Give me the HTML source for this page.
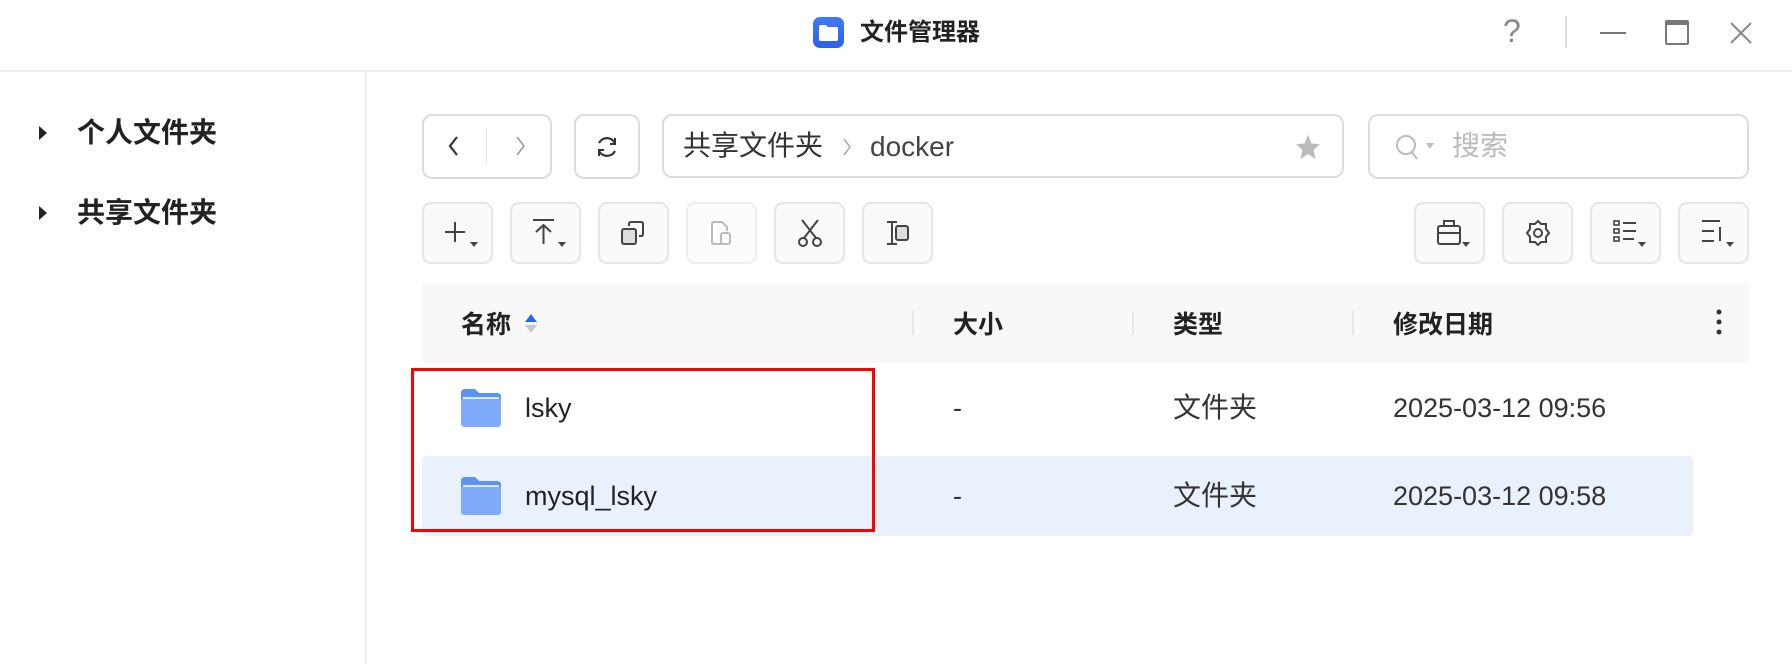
<!DOCTYPE html>
<html><head><meta charset="utf-8"><style>
*{margin:0;padding:0;box-sizing:border-box}
body{width:1792px;height:664px;background:#fff;font-family:"Liberation Sans","Noto Sans CJK SC",sans-serif;color:#222;position:relative;overflow:hidden}
.a{position:absolute}
.btn{position:absolute;border:2px solid #e6e6e6;border-radius:9px;background:#fafafa}
.box{position:absolute;border:2px solid #dcdcdc;border-radius:10px;background:#fff}
.t{position:absolute;white-space:nowrap;line-height:1}
svg{position:absolute}
</style></head><body>
<!-- title bar -->
<div class="a" style="left:0;top:70px;width:1792px;height:2px;background:#eee"></div>
<div class="a" style="left:813px;top:17px;width:31px;height:31px;border-radius:7px;background:linear-gradient(#3f7bf5,#2a62e8)"></div>
<svg style="left:818px;top:24px" width="21" height="18"><path d="M1 3 Q1 1 3 1 H8 L10 3 H18 Q20 3 20 5 V15 Q20 17 18 17 H3 Q1 17 1 15Z" fill="#fff"/></svg>
<div class="t" style="left:860px;top:21px;font-size:24px;font-weight:bold;color:#222">文件管理器</div>
<div class="t" style="left:1503px;top:15px;font-size:32px;color:#888">?</div>
<div class="a" style="left:1565px;top:16px;width:2px;height:32px;background:#ddd"></div>
<div class="a" style="left:1600px;top:32px;width:26px;height:2px;background:#777"></div>
<div class="a" style="left:1665px;top:20px;width:24px;height:25px;border:2px solid #777;border-top-width:5px;border-radius:2px"></div>
<svg style="left:1728px;top:20px" width="26" height="26"><path d="M3 3L23 23M23 3L3 23" stroke="#888" stroke-width="2"/></svg>
<!-- sidebar -->
<div class="a" style="left:365px;top:72px;width:2px;height:592px;background:#eee"></div>
<svg style="left:38px;top:126px" width="10" height="14"><path d="M1 0L9 7L1 14Z" fill="#222"/></svg>
<div class="t" style="left:77px;top:119px;font-size:28px;font-weight:bold">个人文件夹</div>
<svg style="left:38px;top:206px" width="10" height="14"><path d="M1 0L9 7L1 14Z" fill="#222"/></svg>
<div class="t" style="left:77px;top:199px;font-size:28px;font-weight:bold">共享文件夹</div>
<!-- nav -->
<div class="box" style="left:422px;top:114px;width:130px;height:65px"></div>
<div class="a" style="left:486px;top:128px;width:1px;height:36px;background:#e6e6e6"></div>
<svg style="left:448px;top:136px" width="12" height="20"><path d="M9 1L2 10L9 19" stroke="#333" stroke-width="2.2" fill="none"/></svg>
<svg style="left:514px;top:136px" width="12" height="20"><path d="M3 1L10 10L3 19" stroke="#999" stroke-width="1.6" fill="none"/></svg>
<div class="box" style="left:574px;top:114px;width:66px;height:65px"></div>
<svg style="left:594px;top:134px" width="26" height="26"><path d="M21 9A9 9 0 0 0 5 9M5 17A9 9 0 0 0 21 17" stroke="#333" stroke-width="2.2" fill="none"/><path d="M21 4V10H16" stroke="#333" stroke-width="2" fill="none"/><path d="M5 22V16H10" stroke="#333" stroke-width="2" fill="none"/></svg>
<div class="box" style="left:662px;top:114px;width:682px;height:64px"></div>
<div class="t" style="left:683px;top:132px;font-size:28px;color:#333">共享文件夹</div>
<svg style="left:842px;top:138px" width="10" height="18"><path d="M2 1L8 9L2 17" stroke="#aaa" stroke-width="1.5" fill="none"/></svg>
<div class="t" style="left:870px;top:133px;font-size:28px;color:#444">docker</div>
<svg style="left:1295px;top:134px" width="26" height="26"><path d="M13 1L16.5 9.5L25 10L18.5 16L20.5 25L13 20L5.5 25L7.5 16L1 10L9.5 9.5Z" fill="#bbb"/></svg>
<div class="box" style="left:1368px;top:114px;width:381px;height:65px"></div>
<svg style="left:1395px;top:133px" width="28" height="30"><circle cx="11" cy="12" r="9" stroke="#bbb" stroke-width="2" fill="none"/><path d="M17 19L22 26" stroke="#bbb" stroke-width="2"/></svg>
<svg style="left:1426px;top:143px" width="8" height="6"><path d="M0 0H8L4 6Z" fill="#bbb"/></svg>
<div class="t" style="left:1452px;top:132px;font-size:28px;color:#bbb">搜索</div>
<!-- toolbar -->
<div class="btn" style="left:422px;top:202px;width:71px;height:62px"></div>
<svg style="left:444px;top:220px" width="40" height="30"><path d="M11 2V22M1 12H21" stroke="#444" stroke-width="2"/><path d="M26 22H34L30 27Z" fill="#444"/></svg>
<div class="btn" style="left:510px;top:202px;width:71px;height:62px"></div>
<svg style="left:532px;top:218px" width="40" height="32"><path d="M1 2H22M11.5 7V26M4 14L11.5 7L19 14" stroke="#444" stroke-width="2" fill="none"/><path d="M26 24H34L30 29Z" fill="#444"/></svg>
<div class="btn" style="left:598px;top:202px;width:71px;height:62px"></div>
<svg style="left:620px;top:220px" width="28" height="28"><rect x="2" y="9" width="14" height="15" rx="2" stroke="#444" stroke-width="2" fill="#ddd"/><path d="M9 6V4Q9 2 11 2H21Q23 2 23 4V14Q23 16 21 16H19" stroke="#444" stroke-width="2" fill="none"/></svg>
<div class="btn" style="left:686px;top:202px;width:71px;height:62px;border-color:#eee;background:#fcfcfc"></div>
<svg style="left:710px;top:220px" width="26" height="28"><path d="M12 24H4Q2 24 2 22V4Q2 2 4 2H12L17 7V11" stroke="#bbb" stroke-width="2" fill="none"/><rect x="11" y="13" width="9" height="11" rx="2" stroke="#bbb" stroke-width="2" fill="none"/></svg>
<div class="btn" style="left:774px;top:202px;width:71px;height:62px"></div>
<svg style="left:796px;top:218px" width="28" height="30"><path d="M6 2L20 20M22 2L8 20" stroke="#444" stroke-width="2"/><circle cx="7" cy="24" r="4" stroke="#444" stroke-width="2" fill="none"/><circle cx="21" cy="24" r="4" stroke="#444" stroke-width="2" fill="none"/></svg>
<div class="btn" style="left:862px;top:202px;width:71px;height:62px"></div>
<svg style="left:884px;top:220px" width="28" height="28"><path d="M3 2H13M3 24H13M8 2V24" stroke="#444" stroke-width="2"/><rect x="12" y="6" width="12" height="14" rx="2" stroke="#444" stroke-width="2" fill="#ddd"/></svg>
<div class="btn" style="left:1414px;top:202px;width:71px;height:62px"></div>
<svg style="left:1436px;top:218px" width="40" height="32"><rect x="2" y="8" width="22" height="18" rx="2" stroke="#444" stroke-width="2" fill="none"/><path d="M8 8V3H18V8M2 15H24" stroke="#444" stroke-width="2" fill="none"/><path d="M26 24H34L30 29Z" fill="#444"/></svg>
<div class="btn" style="left:1502px;top:202px;width:71px;height:62px"></div>
<svg style="left:1524px;top:219px" width="28" height="30"><path d="M14 2L17 5H22V10L25 14L22 18V23H17L14 26L11 23H6V18L3 14L6 10V5H11Z" stroke="#444" stroke-width="2" fill="none"/><circle cx="14" cy="14" r="4" stroke="#444" stroke-width="2" fill="none"/></svg>
<div class="btn" style="left:1590px;top:202px;width:71px;height:62px"></div>
<svg style="left:1612px;top:219px" width="40" height="32"><rect x="2" y="2" width="5" height="4" stroke="#444" stroke-width="1.6" fill="none"/><rect x="2" y="10" width="5" height="4" stroke="#444" stroke-width="1.6" fill="none"/><rect x="2" y="18" width="5" height="4" stroke="#444" stroke-width="1.6" fill="none"/><path d="M11 4H24M11 12H24M11 20H22" stroke="#444" stroke-width="2"/><path d="M26 23H34L30 28Z" fill="#444"/></svg>
<div class="btn" style="left:1678px;top:202px;width:71px;height:62px"></div>
<svg style="left:1700px;top:219px" width="40" height="32"><path d="M2 2H20M2 12H14M2 22H14M20 8V22" stroke="#444" stroke-width="2" fill="none"/><path d="M26 23H34L30 28Z" fill="#444"/></svg>
<!-- table header -->
<div class="a" style="left:422px;top:283px;width:1327px;height:80px;background:#f8f8f8"></div>
<div class="t" style="left:461px;top:313px;font-size:25px;font-weight:bold">名称</div>
<svg style="left:524px;top:314px" width="14" height="22"><path d="M7 0L13 8H1Z" fill="#2767f0"/><path d="M1 11H13L7 19Z" fill="#c4c8d0"/></svg>
<div class="a" style="left:912px;top:311px;width:2px;height:24px;background:#e6e6e6"></div>
<div class="t" style="left:953px;top:313px;font-size:25px;font-weight:bold">大小</div>
<div class="a" style="left:1132px;top:311px;width:2px;height:24px;background:#e6e6e6"></div>
<div class="t" style="left:1173px;top:313px;font-size:25px;font-weight:bold">类型</div>
<div class="a" style="left:1352px;top:311px;width:2px;height:24px;background:#e6e6e6"></div>
<div class="t" style="left:1393px;top:313px;font-size:25px;font-weight:bold">修改日期</div>
<svg style="left:1714px;top:308px" width="10" height="30"><circle cx="5" cy="4" r="2.5" fill="#333"/><circle cx="5" cy="14" r="2.5" fill="#333"/><circle cx="5" cy="24" r="2.5" fill="#333"/></svg>
<!-- rows -->
<div class="a" style="left:422px;top:456px;width:1271px;height:80px;background:#e9f1fd;border-radius:4px"></div>
<svg style="left:461px;top:389px" width="40" height="38"><path d="M0 4Q0 0 4 0H14L18 4H36Q40 4 40 8V34Q40 38 36 38H4Q0 38 0 34Z" fill="#5b93f5"/><rect x="2" y="8" width="36" height="2" fill="#dde8fd"/><path d="M0 10H40V34Q40 38 36 38H4Q0 38 0 34Z" fill="#80abfb"/></svg>
<div class="t" style="left:525px;top:395px;font-size:27px;color:#222">lsky</div>
<div class="t" style="left:953px;top:395px;font-size:27px;color:#333">-</div>
<div class="t" style="left:1173px;top:394px;font-size:28px;color:#333">文件夹</div>
<div class="t" style="left:1393px;top:395px;font-size:27px;color:#333">2025-03-12 09:56</div>
<svg style="left:461px;top:477px" width="40" height="38"><path d="M0 4Q0 0 4 0H14L18 4H36Q40 4 40 8V34Q40 38 36 38H4Q0 38 0 34Z" fill="#5b93f5"/><rect x="2" y="8" width="36" height="2" fill="#dde8fd"/><path d="M0 10H40V34Q40 38 36 38H4Q0 38 0 34Z" fill="#80abfb"/></svg>
<div class="t" style="left:525px;top:483px;font-size:27px;color:#222">mysql_lsky</div>
<div class="t" style="left:953px;top:483px;font-size:27px;color:#333">-</div>
<div class="t" style="left:1173px;top:482px;font-size:28px;color:#333">文件夹</div>
<div class="t" style="left:1393px;top:483px;font-size:27px;color:#333">2025-03-12 09:58</div>
<div class="a" style="left:411px;top:368px;width:464px;height:164px;border:3px solid #f00"></div>
</body></html>
